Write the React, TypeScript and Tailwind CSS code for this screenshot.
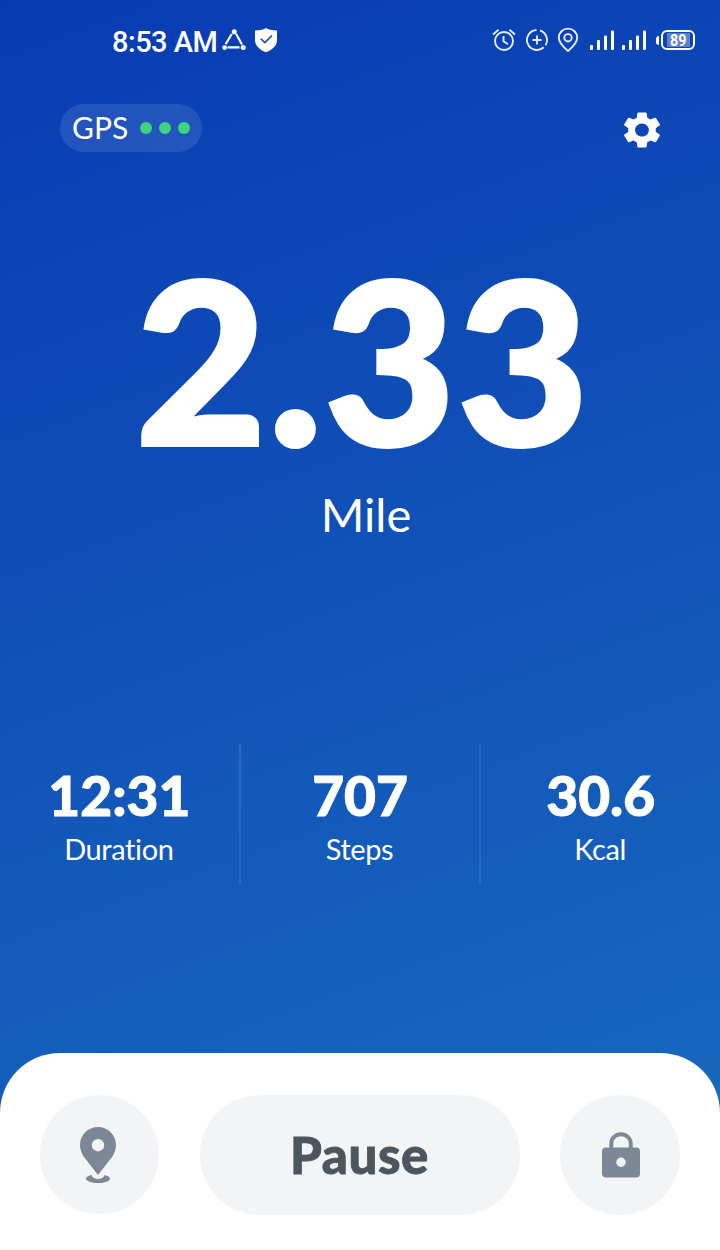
import { MdSettings } from "react-icons/md";

// Workout stats
const stats = [
  { id: "duration", value: "12:31", label: "Duration" },
  { id: "steps", value: "707", label: "Steps" },
  { id: "kcal", value: "30.6", label: "Kcal" },
];

function ShareNodesIcon() {
  return (
    <svg width="24" height="22" viewBox="0 0 24 22" fill="none" stroke="white" strokeWidth="2.2">
      <path d="M9.8 5 3.6 15.2M14 4.8 20 15.5M5.5 18.3H17.5" />
      <g fill="white" stroke="none">
        <circle cx="12.2" cy="2.8" r="2.5" />
        <circle cx="2.6" cy="18.6" r="2.3" />
        <circle cx="21.2" cy="18.6" r="2.5" />
      </g>
    </svg>
  );
}

function ShieldIcon() {
  return (
    <svg width="24" height="26" viewBox="0 0 24 26" fill="none">
      <path
        d="M12 1C14 2.5 18 3.5 23 3.5V13C23 18.5 18.5 23 12 25.2 5.5 23 1 18.5 1 13V3.5C6 3.5 10 2.5 12 1Z"
        fill="white"
      />
      <path d="m6.8 11.7 4 4 7.2-7.2" stroke="#0c43b4" strokeWidth="1.6" />
    </svg>
  );
}

function AlarmIcon() {
  return (
    <svg width="24" height="24" viewBox="0 0 24 24" fill="none" stroke="#e6edff" strokeWidth="1.9">
      <circle cx="12" cy="13" r="9" />
      <path d="M1 6.5 6.5 1.8M23 6.5 17.5 1.8M11.5 8v5.2l4.5 3" />
    </svg>
  );
}

function DataSaverIcon() {
  return (
    <svg width="24" height="24" viewBox="0 0 24 24" fill="none" stroke="#e6edff" strokeWidth="1.9">
      <path d="M11.5 2A10 10 0 1 0 18.8 19.3M15 2.5A10 10 0 0 1 20.5 17.3" />
      <path d="M12 7.5v9M7.500 12h9" />
    </svg>
  );
}

function LocationIcon() {
  return (
    <svg width="22" height="26" viewBox="0 0 22 26" fill="none" stroke="#e6edff" strokeWidth="1.9">
      <path d="M11 24C8 21.5 1.8 16 1.8 10.8a9.2 9.2 0 0 1 18.4 0C20.2 16 14 21.5 11 24Z" />
      <circle cx="11" cy="10.8" r="3.7" />
    </svg>
  );
}

function SignalIcon() {
  return (
    <svg width="25" height="20" viewBox="0 0 25 20" fill="white">
      <rect x="0" y="15" width="3" height="5" rx="1" />
      <rect x="7" y="10" width="3" height="10" rx="1" />
      <rect x="14" y="5.5" width="3" height="14.5" rx="1" />
      <rect x="21" y="0.5" width="3" height="19.5" rx="1" />
    </svg>
  );
}

function PinIcon() {
  return (
    <svg className="mr-[3px]" width="38" height="58" viewBox="0 0 38 58" fill="#7c8896">
      <path
        fillRule="evenodd"
        d="M19 1C9 1 1 9 1 19c0 4 1.3 7.6 3.4 11.2L19 49l14.6-18.8C35.7 26.6 37 23 37 19 37 9 29 1 19 1Zm0 12a6.200 6.200 0 1 1 0 12.400 6.200 6.200 0 0 1 0-12.400Z"
      />
      <path d="M12.5 49c-3.5.7-5.5 2-5.5 3.5C7 55 12 57 19 57s12-2 12-4.5c0-1.5-2-2.8-5.5-3.5-.8 2.6-3.4 4-6.5 4s-5.700-1.400-6.500-4Z" />
    </svg>
  );
}

function LockIcon() {
  return (
    <svg className="ml-[2px]" width="38" height="46" viewBox="0 0 38 46" fill="none">
      <path d="M9.3 17V11.5a9.7 9.3 0 0 1 19.4 0V17" stroke="#7c8896" strokeWidth="4" />
      <rect x="0" y="15.5" width="38" height="30" rx="4" fill="#7c8896" />
      <circle cx="19" cy="30.3" r="4.7" fill="#f2f4f6" />
    </svg>
  );
}

function StatusBar() {
  return (
    <div className="flex h-20 items-center justify-between pl-28 pr-[25px] text-white">
      <div className="flex items-center">
        <span className="mr-[5px] mt-1 font-[Roboto,sans-serif] text-[29px] font-medium leading-none tracking-[-0.5px]">
          8:53 AM
        </span>
        <ShareNodesIcon />
        <span className="ml-2">
          <ShieldIcon />
        </span>
      </div>
      <div className="flex items-center">
        <AlarmIcon />
        <span className="ml-[9px]">
          <DataSaverIcon />
        </span>
        <span className="ml-2">
          <LocationIcon />
        </span>
        <span className="ml-[11px]">
          <SignalIcon />
        </span>
        <span className="ml-[7px]">
          <SignalIcon />
        </span>
        {/* Battery */}
        <span className="ml-[9px] h-[9px] w-[3px] rounded-l-sm bg-white" />
        <span className="ml-0.5 flex h-5 w-[34px] items-center rounded-md border-2 border-white p-[3px] pl-1">
          <span className="flex h-3.5 w-full items-center justify-center bg-[#5f7fce]">
            <span className="mt-px scale-x-90 font-[Roboto,sans-serif] text-base font-bold leading-none">89</span>
          </span>
        </span>
      </div>
    </div>
  );
}

export default function App() {
  return (
    <div className="flex h-[1250px] w-[720px] flex-col overflow-hidden bg-[linear-gradient(160deg,#083bb3_0%,#1154b8_50%,#196cc0_100%)] font-[Lato,sans-serif] text-white">
      <StatusBar />

      {/* GPS and settings */}
      <header className="mt-6 flex h-12 items-center justify-between pl-[60px] pr-[55px]">
        <div className="flex h-12 w-[142px] items-center rounded-full bg-white/10 pl-3">
          <span className="mb-0.5 text-[30px] leading-none">GPS</span>
          <div className="ml-3 flex gap-[7px]">
            <span className="size-3 rounded-full bg-[#3dd381]" />
            <span className="size-3 rounded-full bg-[#3dd381]" />
            <span className="size-3 rounded-full bg-[#3dd381]" />
          </div>
        </div>
        <MdSettings className="mt-1 h-11 w-[46px]" preserveAspectRatio="none" />
      </header>

      {/* Distance */}
      <main className="mt-[91px] flex flex-col items-center">
        <div className="ml-[6px] text-[226px] font-black leading-[230px] tracking-[2px] [-webkit-text-stroke:4px_white]">
          2.33
        </div>
        <div className="ml-3 mt-3 text-[47px] leading-[58px]">Mile</div>
      </main>

      {/* Stats row */}
      <section className="mt-[201px] flex h-[140px] justify-between">
        {stats.map((stat, i) => (
          <div
            key={stat.id}
            className={`flex flex-1 flex-col items-center pt-[19px] ${i > 0 ? "border-l-2 border-[#246ac5]" : ""}`}
          >
            <span className="text-[55px] font-black leading-[64px] [-webkit-text-stroke:1px_white]">{stat.value}</span>
            <span className="mr-px mt-1 text-[29px] leading-9 tracking-[-0.4px] [font-variant-ligatures:none]">
              {stat.label}
            </span>
          </div>
        ))}
      </section>

      {/* Bottom controls */}
      <footer className="mt-auto flex h-[197px] items-start justify-between rounded-t-[60px] bg-white px-10 pt-[42px]">
        <button className="flex size-[119px] items-center justify-center rounded-full bg-[#f2f4f6]">
          <PinIcon />
        </button>
        <button className="h-[120px] w-80 rounded-full bg-[#f2f4f6] pb-0.5 text-[51px] font-black leading-none tracking-[0.6px] text-[#4d565f] [-webkit-text-stroke:0.8px_#4d565f]">
          Pause
        </button>
        <button className="flex size-[120px] items-center justify-center rounded-full bg-[#f2f4f6]">
          <LockIcon />
        </button>
      </footer>
    </div>
  );
}
